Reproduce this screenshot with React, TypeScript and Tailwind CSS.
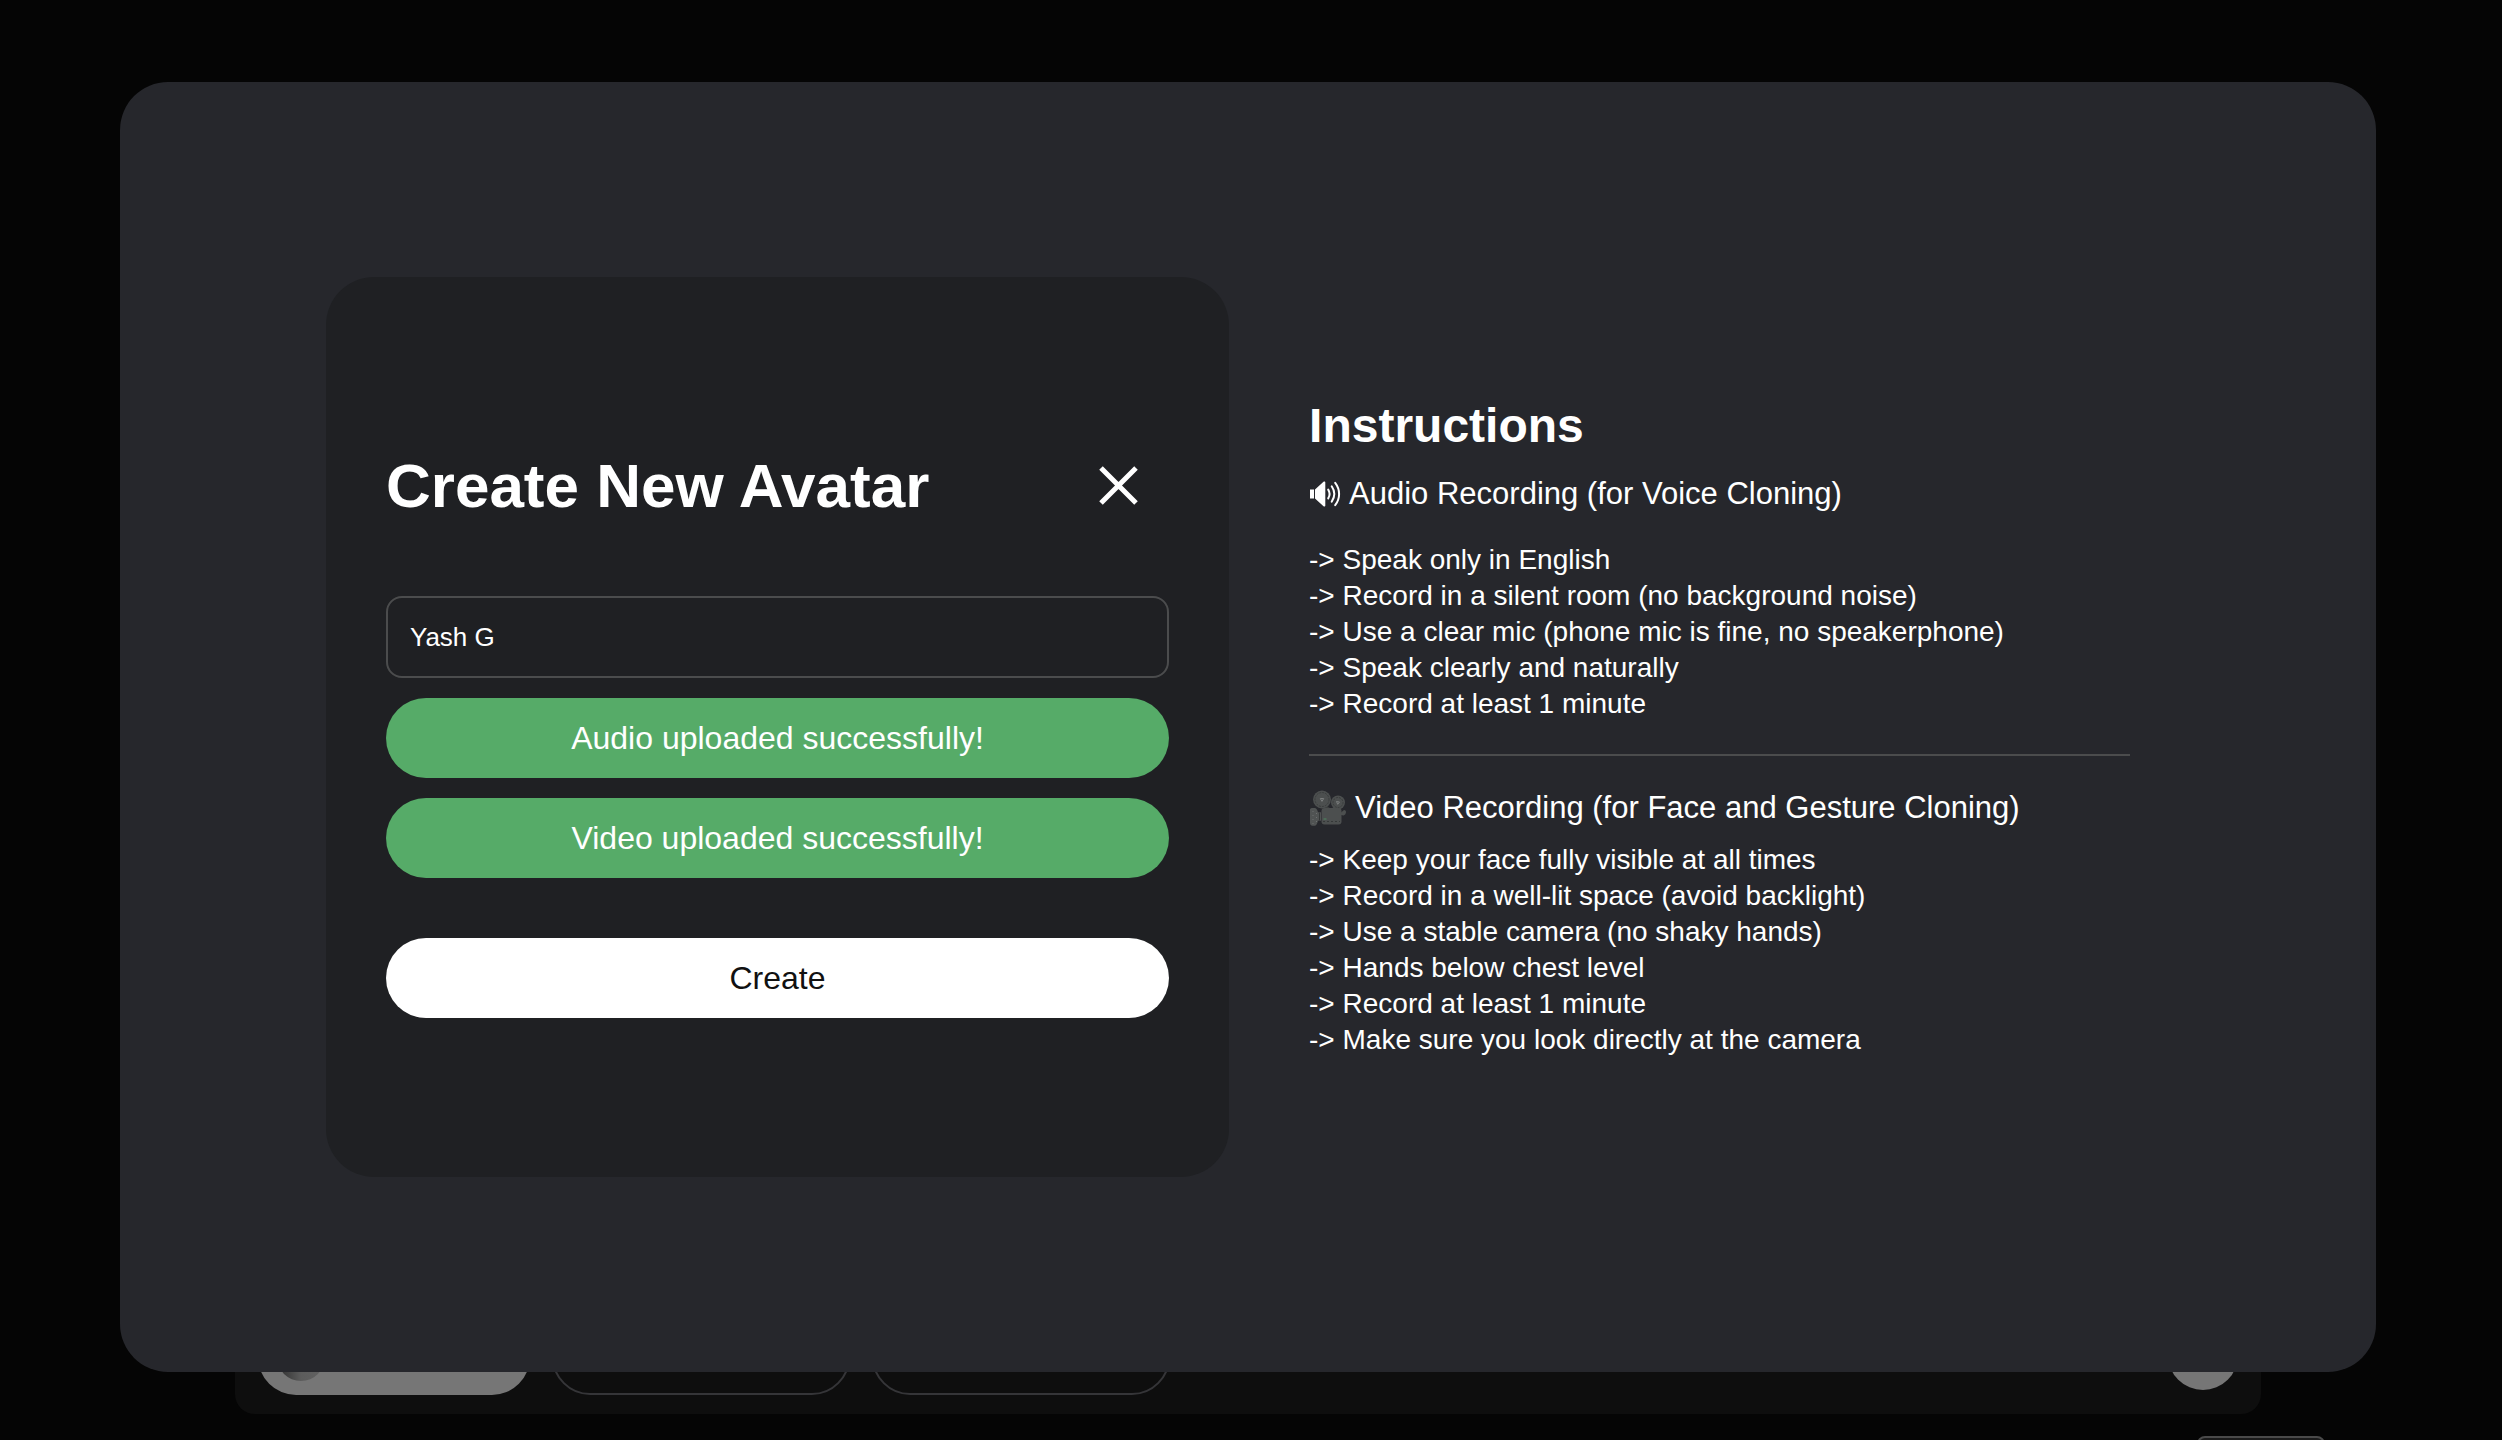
import { useState } from 'react';

const audioSteps = [
  'Speak only in English',
  'Record in a silent room (no background noise)',
  'Use a clear mic (phone mic is fine, no speakerphone)',
  'Speak clearly and naturally',
  'Record at least 1 minute',
];

const videoSteps = [
  'Keep your face fully visible at all times',
  'Record in a well-lit space (avoid backlight)',
  'Use a stable camera (no shaky hands)',
  'Hands below chest level',
  'Record at least 1 minute',
  'Make sure you look directly at the camera',
];

function CloseIcon() {
  return (
    <svg width="40" height="40" viewBox="0 0 40 40" fill="none" stroke="currentColor" strokeWidth="5" aria-hidden="true">
      <path d="M2 2l35 35M37 2l-35 35" />
    </svg>
  );
}

function SpeakerIcon() {
  return (
    <svg width="32" height="26" viewBox="0 0 32 26" fill="none" aria-hidden="true">
      <path d="M1 8.5h4v9H1z M6 8.5L14.5 0.8c.8-.7 1.8-.3 1.8.6v23.2c0 .9-1 1.3-1.8.6L6 17.5z" fill="currentColor" />
      <g stroke="currentColor" strokeWidth="2" strokeLinecap="round">
        <path d="M19.2 8.6c1.7 2.7 1.7 6.1 0 8.8" />
        <path d="M22.7 5.3c3.2 4.7 3.2 10.7 0 15.4" />
        <path d="M26.2 1.8c5.2 6.8 5.2 15.6 0 22.4" />
      </g>
    </svg>
  );
}

function CameraIcon() {
  return (
    <svg width="38" height="36" viewBox="0 0 38 36" aria-hidden="true">
      <path d="M17 15l5 4 5-4 1 6H16z" fill="#3c3f3f" />
      <circle cx="13" cy="9.5" r="9" fill="#4c4f4f" />
      <circle cx="13" cy="9.5" r="7" fill="none" stroke="#3a3d3d" strokeDasharray="2 1" />
      <path d="M11.3 8.5h3.4L13 11.4z" fill="none" stroke="#7b7e7e" />
      <circle cx="29" cy="12.5" r="7" fill="#4c4f4f" />
      <circle cx="29" cy="12.5" r="5" fill="none" stroke="#3a3d3d" strokeDasharray="2 1" />
      <path d="M27.5 11.5l3 .5-1.8 2.3z" fill="none" stroke="#7b7e7e" />
      <path d="M1 19.5c0-1 1.3-1.5 2.5-1.5H6c1.5 0 2.5 2.3 3 4.3h3v8.4H9c-.5 2-1.6 5-3 5H3.5C2 35.7 1 34.5 1 33z" fill="#505353" />
      <path d="M4 21v13M7.5 23v9" stroke="#6d7070" strokeDasharray="1 3" />
      <rect x="12.5" y="18" width="20" height="16.5" rx="3" fill="#4c4f4f" />
      <path d="M10.5 22.5v8" stroke="#333636" />
      <path d="M14 31.5h17" stroke="#353838" strokeDasharray="2 2" />
      <path d="M14.5 29h3" stroke="#4f8a62" />
      <path d="M32 22.5l3-2.5c1.5 0 2 1 2 2s-1 3.5-2.5 3.5L32 25z" fill="#4c4f4f" />
    </svg>
  );
}

function StepList({ steps }: { steps: string[] }) {
  return (
    <ul className="text-[28px] leading-[36px]">
      {steps.map((step) => (
        <li key={step}>-&gt; {step}</li>
      ))}
    </ul>
  );
}

function PageBehind() {
  return (
    <div className="flex h-screen flex-col justify-end" aria-hidden="true">
      <div className="mr-[241px] ml-[235px] flex items-center justify-between rounded-[20px] bg-[#0e0e0e] px-[23px] pt-5 pb-[19px]">
        <div className="flex gap-[22px]">
          <div className="flex h-[76px] w-[272px] items-center rounded-full bg-[#767676] pl-[19px]">
            <div className="size-12 rounded-full bg-linear-to-r from-[#2e2e2e] via-[#5c5c5c] to-[#626262]" />
          </div>
          <div className="h-[76px] w-[298px] rounded-full border-2 border-[#353538]" />
          <div className="h-[76px] w-[298px] rounded-full border-2 border-[#353538]" />
        </div>
        <div className="mb-1 size-[70px] rounded-full bg-[#767676]" />
      </div>
      <div className="mt-[22px] mr-[177px] h-1 w-32 shrink-0 self-end">
        <div className="h-10 rounded-lg border-2 border-[#4a4a4a] bg-[#1b1b1b]" />
      </div>
    </div>
  );
}

export default function App() {
  const [name, setName] = useState('Yash G');
  const [open, setOpen] = useState(true);

  return (
    <div className="relative h-screen overflow-hidden bg-[#050505] font-['Liberation_Sans',Arial,sans-serif] text-white">
      <PageBehind />

      {open && (
        <div className="absolute inset-0 pt-[82px] pr-[126px] pl-[120px]">
          <div
            role="dialog"
            aria-labelledby="avatar-title"
            className="grid grid-cols-[11fr_10fr] items-center gap-20 rounded-[48px] bg-[#26272c] py-[195px] pr-[246px] pl-[206px]"
          >
            {/* Form */}
            <form
              onSubmit={(e) => e.preventDefault()}
              className="flex flex-col gap-5 rounded-[48px] bg-[#1f2023] px-[60px] py-[159px]"
            >
              <div className="mb-10 flex items-center justify-between">
                <h1 id="avatar-title" className="text-[62px] leading-[72px] font-bold">Create New Avatar</h1>
                <button
                  type="button"
                  aria-label="Close"
                  onClick={() => setOpen(false)}
                  className="flex size-[100px] items-center justify-center"
                >
                  <CloseIcon />
                </button>
              </div>
              <input
                type="text"
                aria-label="Avatar name"
                value={name}
                onChange={(e) => setName(e.target.value)}
                className="h-[82px] w-full rounded-2xl border-2 border-[#4b4c4d] bg-transparent px-[22px] text-[26px] outline-none"
              />
              <button type="button" className="h-20 rounded-full bg-[#56ab68] text-[32px]">
                Audio uploaded successfully!
              </button>
              <button type="button" className="h-20 rounded-full bg-[#56ab68] text-[32px]">
                Video uploaded successfully!
              </button>
              <button type="submit" className="mt-10 h-20 rounded-full bg-white text-[32px] text-[#111]">
                Create
              </button>
            </form>

            {/* Instructions */}
            <div>
              <h2 className="mb-[18px] text-[48px] leading-[60px] font-bold">Instructions</h2>
              <h3 className="mb-7 flex items-center gap-2 text-[31px] leading-[40px]">
                <SpeakerIcon /> Audio Recording (for Voice Cloning)
              </h3>
              <StepList steps={audioSteps} />
              <hr className="my-8 border-t-2 border-[#4b4c4d]" />
              <h3 className="mb-[14px] flex items-center gap-2 text-[31px] leading-[40px]">
                <CameraIcon /> Video Recording (for Face and Gesture Cloning)
              </h3>
              <StepList steps={videoSteps} />
            </div>
          </div>
        </div>
      )}
    </div>
  );
}
